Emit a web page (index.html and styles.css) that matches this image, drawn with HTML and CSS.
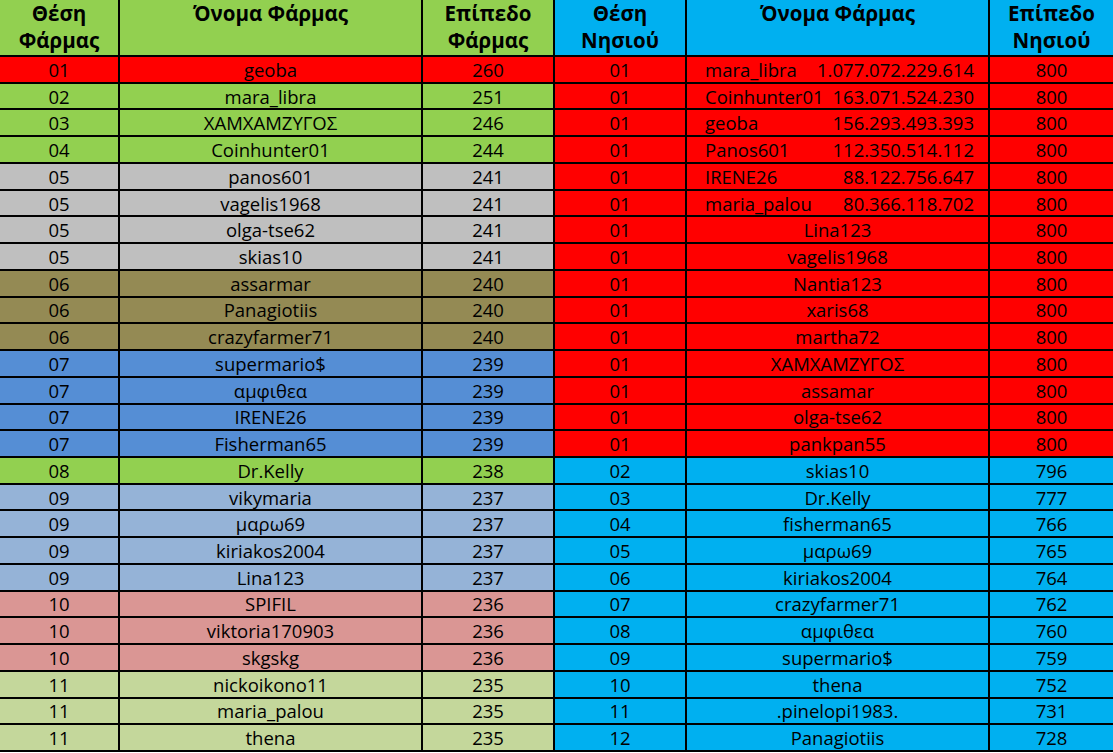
FILE: index.html
```html
<!DOCTYPE html>
<html lang="el">
<head>
<meta charset="utf-8">
<title>Κατάταξη Φάρμας και Νησιού</title>
<link rel="stylesheet" href="styles.css">
</head>
<body>
<div class="page">
  <div class="sheet farm">
    <div class="row head"><div>Θέση Φάρμας</div><div>Όνομα Φάρμας</div><div>Επίπεδο Φάρμας</div></div>
    <div class="row red"><div>01</div><div>geoba</div><div>260</div></div>
    <div class="row green"><div>02</div><div>mara_libra</div><div>251</div></div>
    <div class="row green"><div>03</div><div>ΧΑΜΧΑΜΖΥΓΟΣ</div><div>246</div></div>
    <div class="row green"><div>04</div><div>Coinhunter01</div><div>244</div></div>
    <div class="row gray"><div>05</div><div>panos601</div><div>241</div></div>
    <div class="row gray"><div>05</div><div>vagelis1968</div><div>241</div></div>
    <div class="row gray"><div>05</div><div>olga-tse62</div><div>241</div></div>
    <div class="row gray"><div>05</div><div>skias10</div><div>241</div></div>
    <div class="row olive"><div>06</div><div>assarmar</div><div>240</div></div>
    <div class="row olive"><div>06</div><div>Panagiotiis</div><div>240</div></div>
    <div class="row olive"><div>06</div><div>crazyfarmer71</div><div>240</div></div>
    <div class="row blue"><div>07</div><div>supermario$</div><div>239</div></div>
    <div class="row blue"><div>07</div><div>αμφιθεα</div><div>239</div></div>
    <div class="row blue"><div>07</div><div>IRENE26</div><div>239</div></div>
    <div class="row blue"><div>07</div><div>Fisherman65</div><div>239</div></div>
    <div class="row green"><div>08</div><div>Dr.Kelly</div><div>238</div></div>
    <div class="row lblue"><div>09</div><div>vikymaria</div><div>237</div></div>
    <div class="row lblue"><div>09</div><div>μαρω69</div><div>237</div></div>
    <div class="row lblue"><div>09</div><div>kiriakos2004</div><div>237</div></div>
    <div class="row lblue"><div>09</div><div>Lina123</div><div>237</div></div>
    <div class="row pink"><div>10</div><div>SPIFIL</div><div>236</div></div>
    <div class="row pink"><div>10</div><div>viktoria170903</div><div>236</div></div>
    <div class="row pink"><div>10</div><div>skgskg</div><div>236</div></div>
    <div class="row lgreen"><div>11</div><div>nickoikono11</div><div>235</div></div>
    <div class="row lgreen"><div>11</div><div>maria_palou</div><div>235</div></div>
    <div class="row lgreen"><div>11</div><div>thena</div><div>235</div></div>
  </div>
  <div class="sheet island">
    <div class="row head"><div>Θέση Νησιού</div><div>Όνομα Φάρμας</div><div>Επίπεδο Νησιού</div></div>
    <div class="row red"><div>01</div><div class="split"><span>mara_libra</span><span>1.077.072.229.614</span></div><div>800</div></div>
    <div class="row red"><div>01</div><div class="split"><span>Coinhunter01</span><span>163.071.524.230</span></div><div>800</div></div>
    <div class="row red"><div>01</div><div class="split"><span>geoba</span><span>156.293.493.393</span></div><div>800</div></div>
    <div class="row red"><div>01</div><div class="split"><span>Panos601</span><span>112.350.514.112</span></div><div>800</div></div>
    <div class="row red"><div>01</div><div class="split"><span>IRENE26</span><span>88.122.756.647</span></div><div>800</div></div>
    <div class="row red"><div>01</div><div class="split"><span>maria_palou</span><span>80.366.118.702</span></div><div>800</div></div>
    <div class="row red"><div>01</div><div>Lina123</div><div>800</div></div>
    <div class="row red"><div>01</div><div>vagelis1968</div><div>800</div></div>
    <div class="row red"><div>01</div><div>Nantia123</div><div>800</div></div>
    <div class="row red"><div>01</div><div>xaris68</div><div>800</div></div>
    <div class="row red"><div>01</div><div>martha72</div><div>800</div></div>
    <div class="row red"><div>01</div><div>ΧΑΜΧΑΜΖΥΓΟΣ</div><div>800</div></div>
    <div class="row red"><div>01</div><div>assamar</div><div>800</div></div>
    <div class="row red"><div>01</div><div>olga-tse62</div><div>800</div></div>
    <div class="row red"><div>01</div><div>pankpan55</div><div>800</div></div>
    <div class="row cyan"><div>02</div><div>skias10</div><div>796</div></div>
    <div class="row cyan"><div>03</div><div>Dr.Kelly</div><div>777</div></div>
    <div class="row cyan"><div>04</div><div>fisherman65</div><div>766</div></div>
    <div class="row cyan"><div>05</div><div>μαρω69</div><div>765</div></div>
    <div class="row cyan"><div>06</div><div>kiriakos2004</div><div>764</div></div>
    <div class="row cyan"><div>07</div><div>crazyfarmer71</div><div>762</div></div>
    <div class="row cyan"><div>08</div><div>αμφιθεα</div><div>760</div></div>
    <div class="row cyan"><div>09</div><div>supermario$</div><div>759</div></div>
    <div class="row cyan"><div>10</div><div>thena</div><div>752</div></div>
    <div class="row cyan"><div>11</div><div>.pinelopi1983.</div><div>731</div></div>
    <div class="row cyan"><div>12</div><div>Panagiotiis</div><div>728</div></div>
  </div>
</div>
</body>
</html>
```
FILE: styles.css
```css
html, body {
  margin: 0;
  padding: 0;
  background: #ffffff;
}

.page {
  display: flex;
  width: 1113px;
  font-family: "Open Sans", "Noto Sans", sans-serif;
  font-size: 18.5px;
  color: #000;
}

.sheet {
  display: grid;
  grid-template-rows: 57px repeat(26, 1fr);
  height: 752px;
}

.farm {
  grid-template-columns: 120px 303px 132px;
}

.island {
  grid-template-columns: 132px 303px 123px;
}

.row {
  display: contents;
}

.row > div {
  box-sizing: border-box;
  border-right: 2px solid #000;
  border-bottom: 2px solid #000;
  display: flex;
  align-items: center;
  justify-content: center;
  text-align: center;
  white-space: nowrap;
  overflow: hidden;
}

.island .row > div:last-child {
  border-right: none;
}

.row.head > div {
  align-items: flex-start;
  white-space: normal;
  font-size: 20.5px;
  font-weight: 700;
  line-height: 27px;
  padding: 0 4px;
}

.farm .head > div { background: #92d050; }
.island .head > div { background: #00b0f0; }

.row.red > div { background: #ff0000; }
.row.green > div { background: #92d050; }
.row.gray > div { background: #bfbfbf; }
.row.olive > div { background: #948a54; }
.row.blue > div { background: #558ed5; }
.row.lblue > div { background: #95b3d7; }
.row.pink > div { background: #da9694; }
.row.lgreen > div { background: #c4d79b; }
.row.cyan > div { background: #00b0f0; }

.row > div.split {
  justify-content: space-between;
  padding: 0 14px 0 18px;
}
```
